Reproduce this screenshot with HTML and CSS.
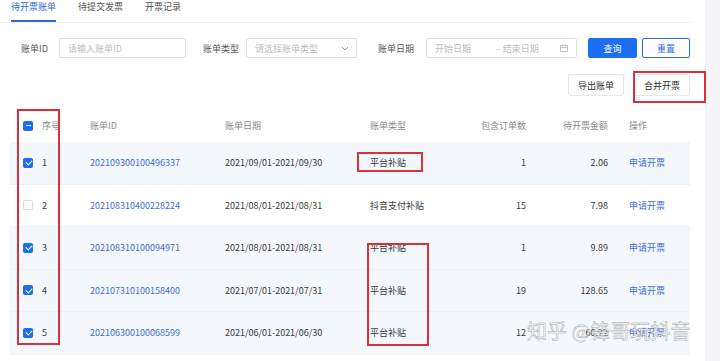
FILE: index.html
```html
<!DOCTYPE html>
<html lang="zh">
<head>
  <meta charset="UTF-8" />
  <meta name="viewport" content="width=device-width, initial-scale=1" />
  <title>待开票账单</title>
  <link rel="stylesheet" href="styles.css">
</head>
<body>
  <div class="page">
    <div class="main">
      <div class="tabs">
        <span class="tab active">待开票账单</span>
        <span class="tab">待提交发票</span>
        <span class="tab">开票记录</span>
      </div>

      <div class="filters">
        <label class="lbl lbl-id">账单ID</label>
        <div class="box box-id"><span class="ph">请输入账单ID</span></div>

        <label class="lbl lbl-type">账单类型</label>
        <div class="box box-type">
          <span class="ph">请选择账单类型</span>
          <svg class="chev" width="8" height="5" viewBox="0 0 8 5"><path d="M1 1l3 3 3-3" fill="none" stroke="#a8a8a8" stroke-width="1"/></svg>
        </div>

        <label class="lbl lbl-date">账单日期</label>
        <div class="box box-date">
          <span class="ph">开始日期</span>
          <span class="ph sep">– 结束日期</span>
          <svg class="cal" width="8" height="8" viewBox="0 0 8 8"><rect x="0.5" y="1.5" width="7" height="6" fill="none" stroke="#c4c4c4"/><path d="M0.5 3.5h7M2.5 0.5v2M5.5 0.5v2" stroke="#c4c4c4"/></svg>
        </div>

        <button class="btn-primary">查询</button>
        <button class="btn-ghost">重置</button>
      </div>

      <div class="actions">
        <button class="btn">导出账单</button>
        <button class="btn">合并开票</button>
      </div>

      <div class="table">
        <div class="row head">
          <div class="cell chk-cell"><span class="chk part"></span></div>
          <div class="cell">序号</div>
          <div class="cell">账单ID</div>
          <div class="cell">账单日期</div>
          <div class="cell">账单类型</div>
          <div class="cell num">包含订单数</div>
          <div class="cell num">待开票金额</div>
          <div class="cell op">操作</div>
        </div>

        <div class="row sel">
          <div class="cell chk-cell"><span class="chk on"></span></div>
          <div class="cell">1</div>
          <div class="cell link">202109300100496337</div>
          <div class="cell">2021/09/01-2021/09/30</div>
          <div class="cell">平台补贴</div>
          <div class="cell num">1</div>
          <div class="cell num">2.06</div>
          <div class="cell op link">申请开票</div>
        </div>

        <div class="row">
          <div class="cell chk-cell"><span class="chk"></span></div>
          <div class="cell">2</div>
          <div class="cell link">202108310400228224</div>
          <div class="cell">2021/08/01-2021/08/31</div>
          <div class="cell">抖音支付补贴</div>
          <div class="cell num">15</div>
          <div class="cell num">7.98</div>
          <div class="cell op link">申请开票</div>
        </div>

        <div class="row sel">
          <div class="cell chk-cell"><span class="chk on"></span></div>
          <div class="cell">3</div>
          <div class="cell link">202108310100094971</div>
          <div class="cell">2021/08/01-2021/08/31</div>
          <div class="cell">平台补贴</div>
          <div class="cell num">1</div>
          <div class="cell num">9.89</div>
          <div class="cell op link">申请开票</div>
        </div>

        <div class="row sel">
          <div class="cell chk-cell"><span class="chk on"></span></div>
          <div class="cell">4</div>
          <div class="cell link">202107310100158400</div>
          <div class="cell">2021/07/01-2021/07/31</div>
          <div class="cell">平台补贴</div>
          <div class="cell num">19</div>
          <div class="cell num">128.65</div>
          <div class="cell op link">申请开票</div>
        </div>

        <div class="row sel">
          <div class="cell chk-cell"><span class="chk on"></span></div>
          <div class="cell">5</div>
          <div class="cell link">202106300100068599</div>
          <div class="cell">2021/06/01-2021/06/30</div>
          <div class="cell">平台补贴</div>
          <div class="cell num">12</div>
          <div class="cell num">60.72</div>
          <div class="cell op link">申请开票</div>
        </div>
      </div>
    </div>
    <div class="side"></div>

    <!-- red annotation boxes drawn over the screenshot -->
    <div class="mark mark-merge"></div>
    <div class="mark mark-chk"></div>
    <div class="mark mark-type1"></div>
    <div class="mark mark-type3"></div>

    <div class="watermark">知乎 @锋哥玩抖音</div>
  </div>
</body>
</html>
```

FILE: styles.css
```css
* { box-sizing: border-box; }
body { margin: 0; background: #fff; font-family: "Noto Sans CJK SC", "Noto Sans", sans-serif; font-size: 9px; color: #3a3a3a; }
.page { position: relative; display: flex; width: 720px; height: 361px; overflow: hidden; }
.main { width: 705px; background: #fff; }
.side { flex: 1; background: #f5f5f7; }

.tabs { display: flex; gap: 22px; padding-left: 11px; margin-right: 13px; height: 23px; border-bottom: 1px solid #f0f0f0; }
.tab { height: 22px; padding-top: 1px; line-height: 11px; color: #555; border-bottom: 2px solid transparent; }
.tab.active { color: #2f6bd8; border-bottom-color: #2f6bd8; }

.filters { display: flex; align-items: center; height: 20px; margin-top: 15px; padding-left: 21px; }
.lbl { color: #555; }
.lbl-id { width: 38px; }
.lbl-type { width: 43px; margin-left: 17px; }
.lbl-date { width: 48px; margin-left: 21px; }
.box { position: relative; display: flex; align-items: center; height: 20px; padding-left: 8px; border: 1px solid #e0e0e0; border-radius: 2px; }
.box-id { width: 127px; }
.box-type { width: 111px; }
.box-date { width: 151px; }
.ph { color: #bdbdbd; }
.sep { margin-left: 25px; }
.chev { position: absolute; right: 7px; top: 7px; }
.cal { position: absolute; right: 8px; top: 5px; }

.btn-primary, .btn-ghost, .btn { font-family: inherit; font-size: 9px; height: 20px; border-radius: 2px; padding: 0; }
.btn-primary { width: 49px; margin-left: 11px; background: #1d6ef2; color: #fff; border: none; }
.btn-ghost { width: 48px; margin-left: 5px; background: #fff; color: #2f6bd8; border: 1px solid #2f6bd8; }

.actions { display: flex; justify-content: flex-end; gap: 10px; margin-top: 16px; padding-right: 15px; }
.btn { height: 22px; width: 56px; background: #fff; color: #333; border: 1px solid #e6e6e6; }

.table { width: 680px; margin: 13px 0 0 10px; }
.row { display: grid; grid-template-columns: 28px 52px 135px 145px 90px 66px 82px 82px; align-items: center; height: 42.5px; border-bottom: 1px solid #eef1f6; }
.row.head { height: 33px; color: #8c8c8c; border-bottom: none; }
.row.sel { background: #f4f7fc; }
.cell { white-space: nowrap; }
.chk-cell { padding-left: 13px; display: flex; }
.cell:nth-child(2) { padding-left: 4px; }
.num { text-align: right; }
.op { padding-left: 21px; }
.link { color: #4270cf; }

.chk { display: block; width: 10px; height: 10px; border-radius: 1.5px; border: 1px solid #d9dce2; background: #fff; position: relative; }
.chk.on, .chk.part { background: #1d6ef2; border-color: #1d6ef2; }
.chk.on::after { content: ""; position: absolute; left: 2.5px; top: 0.5px; width: 3px; height: 5px; border: solid #fff; border-width: 0 1.3px 1.3px 0; transform: rotate(45deg); }
.chk.part::after { content: ""; position: absolute; left: 1.5px; top: 3.5px; width: 5px; height: 1.3px; background: #fff; }

.mark { position: absolute; border: 2px solid #d8313a; }
.mark-merge { left: 633px; top: 71px; width: 73px; height: 32px; }
.mark-chk { left: 17px; top: 109px; width: 43px; height: 236px; }
.mark-type1 { left: 357px; top: 152px; width: 66px; height: 20px; }
.mark-type3 { left: 367px; top: 243px; width: 62px; height: 103px; }

.watermark { position: absolute; left: 527px; top: 316px; font-size: 20px; white-space: nowrap; color: rgba(255, 255, 255, 0.85); -webkit-text-stroke: 0.5px rgba(120, 120, 120, 0.7); }
```
